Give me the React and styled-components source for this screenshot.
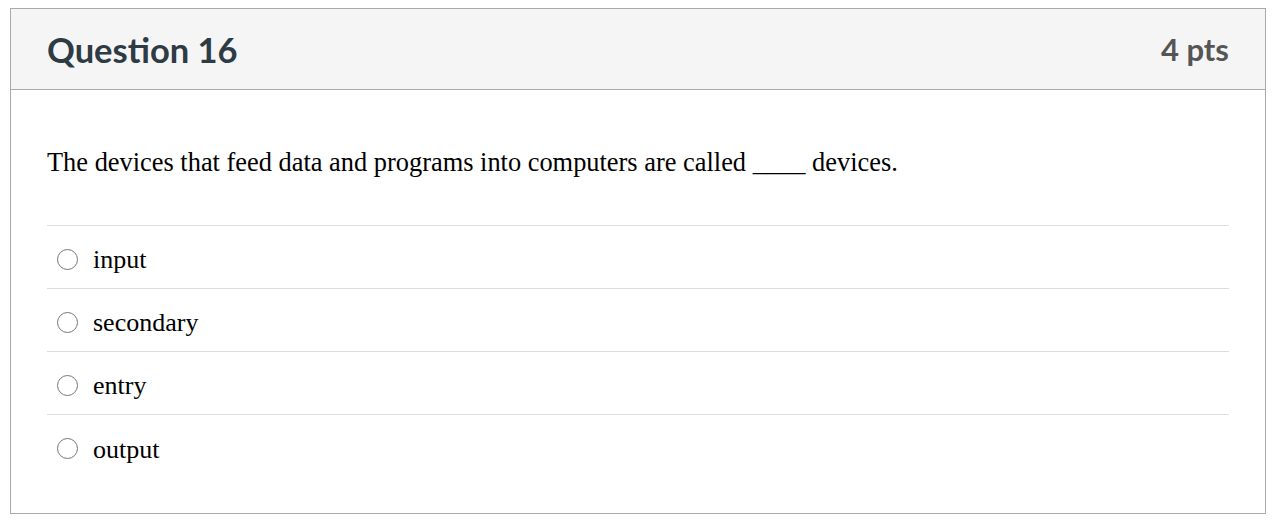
import React from 'react'
import styled, { createGlobalStyle } from 'styled-components'

const GlobalStyle = createGlobalStyle`
	body {
		margin: 0;
		background: #fff;
	}
`

const Page = styled.div`
	padding: 8px 10px 0 10px;
`

const Card = styled.div`
	border: 1px solid #aaa;
	height: 506px;
	box-sizing: border-box;
`

const Header = styled.div`
	display: flex;
	align-items: center;
	justify-content: space-between;
	height: 81px;
	box-sizing: border-box;
	padding: 0 36px 0 36px;
	background: #f5f5f5;
	border-bottom: 1px solid #aaa;
	font-family: Lato, 'Liberation Sans', sans-serif;
	font-weight: 700;
`

const Title = styled.h2`
	margin: 0;
	font-size: 34.5px;
	color: #2d3b45;
	font-weight: 700;
`

const Points = styled.span`
	font-size: 31px;
	color: #555;
`

const Body = styled.div`
	padding: 0 36px;
	font-family: 'Liberation Serif', 'Times New Roman', serif;
	color: #000;
`

const Prompt = styled.p`
	margin: 0;
	padding: 54px 0 45px;
	font-size: 26.4px;
	line-height: 36px;
	border-bottom: 1px solid #ddd;
`

const Answers = styled.ul`
	list-style: none;
	margin: 0;
	padding: 0;
`

const Answer = styled.li`
	display: flex;
	align-items: center;
	gap: 15px;
	height: 63px;
	box-sizing: border-box;
	padding: 6px 0 0 10px;
	font-size: 26px;
	border-bottom: ${(p) => (p.$last ? 'none' : '1px solid #ddd')};
`

const Radio = styled.span`
	width: 21px;
	height: 21px;
	box-sizing: border-box;
	border: 1.7px solid #767676;
	border-radius: 50%;
	flex-shrink: 0;
	margin-top: -2px;
`

const options = ['input', 'secondary', 'entry', 'output']

const App = () => (
	<React.Fragment>
		<GlobalStyle />
		<Page>
			<Card>
				<Header>
					<Title>Question 16</Title>
					<Points>4 pts</Points>
				</Header>
				<Body>
					<Prompt>
						The devices that feed data and programs into computers are
						called ____ devices.
					</Prompt>
					<Answers>
						{options.map((o, i) => (
							<Answer key={o} $last={i === options.length - 1}>
								<Radio />
								{o}
							</Answer>
						))}
					</Answers>
				</Body>
			</Card>
		</Page>
	</React.Fragment>
)

export default App
